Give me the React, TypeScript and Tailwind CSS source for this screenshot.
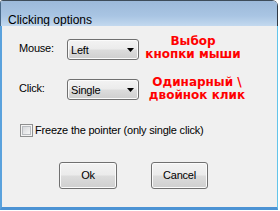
import React from "react";

const btnBg =
  "bg-[linear-gradient(to_bottom,#f3f3f3_0%,#ebebeb_48%,#dcdcdc_52%,#cfcfcf_100%)] shadow-[inset_0_0_0_1px_#fbfbfb] border border-[#707070] rounded-[3px]";

function Dropdown({ value }: { value: string }) {
  return (
    <div className={`w-[72px] h-[21px] flex justify-between items-center pr-[4px] ${btnBg}`}>
      <span className="self-start pl-[3px] pt-[2px] leading-[17px] text-[11px] tracking-[-0.2px] text-black">
        {value}
      </span>
      <svg width="7" height="4" viewBox="0 0 7 4" className="block">
        <path d="M0 0H7L3.5 4Z" fill="#000" />
      </svg>
    </div>
  );
}

export default function App() {
  return (
    <div
      className="w-[280px] h-[211px] bg-white"
      style={{ fontFamily: '"Liberation Sans", Arial, sans-serif' }}
    >
      <div className="w-[278px] h-[210px] flex flex-col overflow-hidden rounded-tl-[3px] rounded-tr-[6px] border-t border-t-[#3e4c5a]">
        <div className="h-[25px] shrink-0 bg-[linear-gradient(to_bottom,#9cb9da,#a9c5e3_60%,#c3d9ef)] border-l border-l-[#4a6a8a] border-r border-r-[#2e3a46] pl-[7px] pt-[6px]">
          <span className="text-[12px] leading-[14px] text-black">Clicking options</span>
        </div>
        <div className="flex-1 flex flex-col bg-[#f0f0f0] border-l-2 border-l-[#5aa2dd] border-r border-r-[#63c4ea] border-b-[3px] border-b-[#4c93d4] pt-[13px] text-[11px] tracking-[-0.2px] text-black">
          <div className="flex items-start pl-[17px] h-[21px]">
            <span className="w-[48px] leading-[19px]">Mouse:</span>
            <Dropdown value="Left" />
            <div
              className="ml-[4px] w-[100px] -mt-[4px] text-center text-[12px] font-bold leading-[13px] tracking-normal text-[#ff0000] whitespace-nowrap"
              style={{ fontFamily: '"DejaVu Sans", Verdana, sans-serif' }}
            >
              <div>Выбор</div>
              <div>кнопки мыши</div>
            </div>
          </div>
          <div className="flex items-start pl-[17px] h-[21px] mt-[19px]">
            <span className="w-[48px] leading-[19px]">Click:</span>
            <Dropdown value="Single" />
            <div
              className="ml-[8px] w-[100px] -mt-[3px] text-center text-[12px] font-bold leading-[13px] tracking-normal text-[#ff0000] whitespace-nowrap"
              style={{ fontFamily: '"DejaVu Sans", Verdana, sans-serif' }}
            >
              <div>Одинарный \</div>
              <div>двойнок клик</div>
            </div>
          </div>
          <div className="flex items-center pl-[18px] h-[13px] mt-[24px] gap-[2px]">
            <div className="w-[13px] h-[13px] border border-[#8e8f8f] bg-[#f4f4f4] flex items-center justify-center">
              <div className="w-[9px] h-[9px] border border-[#b9bcc0] bg-[linear-gradient(135deg,#d6d8db,#f6f6f6)]" />
            </div>
            <span className="leading-[13px] whitespace-nowrap">Freeze the pointer (only single click)</span>
          </div>
          <div className="flex pl-[57px] gap-[34px] mt-[25px]">
            <button className={`w-[58px] h-[27px] text-[11px] leading-[25px] text-black ${btnBg}`}>Ok</button>
            <button className={`w-[57px] h-[27px] text-[11px] leading-[25px] text-black ${btnBg}`}>Cancel</button>
          </div>
        </div>
      </div>
    </div>
  );
}
